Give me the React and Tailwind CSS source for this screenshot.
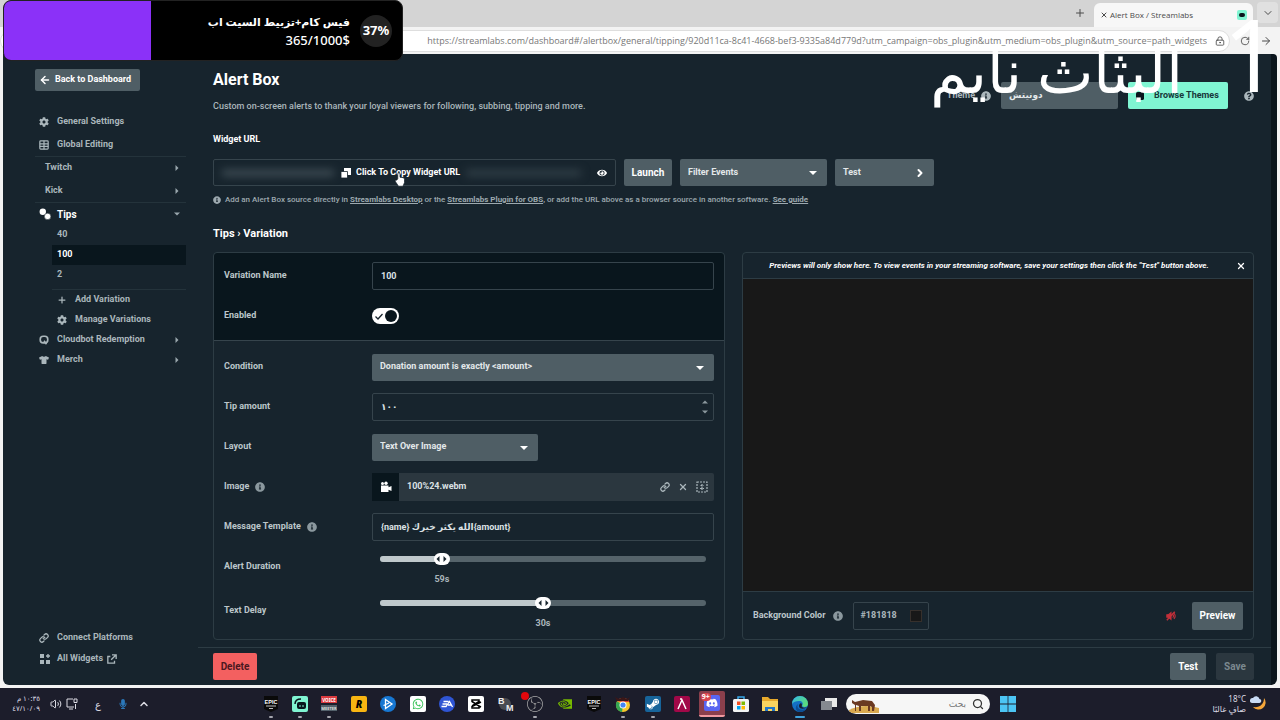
import React from "react";
import { FaCog, FaTshirt, FaInfoCircle, FaEye, FaQuestionCircle, FaWhatsapp, FaDiscord, FaSteamSymbol, FaVolumeMute, FaMicrophone } from "react-icons/fa";
import { SiNvidia, SiObsstudio } from "react-icons/si";
import { ArrowLeft, ArrowRight, ChevronDown, ChevronRight, ChevronUp, Link, Plus, Search, Volume2, X, LockKeyhole, RotateCw } from "lucide-react";

const control = "h-7 w-full rounded-xs border border-[#36444c] px-2 text-[9px] font-bold text-[#dbe1e4] outline-none";

function Caret({ dir = "down", className = "" }) {
  const d = { down: "M0 2h8L4 6z", right: "M2 0v8l4-4z", up: "M0 6h8L4 2z" }[dir];
  return (
    <svg viewBox="0 0 8 8" className={className} fill="currentColor" aria-hidden="true">
      <path d={d} />
    </svg>
  );
}

function GridIcon() {
  return (
    <svg viewBox="0 0 12 12" className="size-2.5" fill="none" stroke="currentColor" strokeWidth="1.5">
      <rect x="1" y="1" width="10" height="10" rx="1" />
      <path d="M6 1v10M1 4.500h5M6 7.500h5M6 4.500h5M1 7.500h5" />
    </svg>
  );
}

function TipsIcon() {
  return (
    <svg viewBox="0 0 12 12" className="size-3 text-white" fill="currentColor">
      <circle cx="3.8" cy="3.8" r="3.2" />
      <circle cx="8.6" cy="8.4" r="3.2" stroke="#17242d" strokeWidth=".5" />
    </svg>
  );
}

function BotIcon() {
  return (
    <svg viewBox="0 0 12 12" className="size-2.5" fill="none" stroke="currentColor" strokeWidth="2">
      <rect x="1.500" y="1.500" width="9" height="8" rx="3.500" />
      <path d="M6 7l3 4" />
    </svg>
  );
}

function WidgetsIcon() {
  return (
    <svg viewBox="0 0 12 12" className="size-3" fill="currentColor">
      <path d="M1 1h4v4H1zM1 7h4v4H1zM7 7h4v4H7zM8.300 1h1.400v1.300H11v1.400H9.700V5H8.300V3.700H7V2.300h1.300z" />
    </svg>
  );
}

function ExternalIcon() {
  return (
    <svg viewBox="0 0 12 12" className="size-2.5" fill="none" stroke="currentColor" strokeWidth="1.600">
      <path d="M4 3H1v8h8V8M6 1h5v5M11 1L5 7" />
    </svg>
  );
}

function MovieIcon() {
  return (
    <svg viewBox="0 0 12 12" className="size-3 text-white" fill="currentColor">
      <circle cx="2.500" cy="2.500" r="1.500" />
      <circle cx="6" cy="2.200" r="1.700" />
      <path d="M1 4.500h7.500v1.700L11.500 5v5L8.500 8.800V11H1z" />
    </svg>
  );
}

function SlashedSpeakerIcon() {
  return (
    <svg viewBox="0 0 12 12" className="size-2.5" fill="none" stroke="currentColor" strokeWidth="1.300">
      <path d="M1 4.500v3h2L6 10V2L3 4.500z" fill="currentColor" />
      <path d="M8 4q2 2 0 4M9.500 2.500q3 3.500 0 7" />
      <path d="M1 11L10.500 1" strokeWidth="1.800" />
    </svg>
  );
}

function NavRow({ icon, label, caret, className = "h-5", active }) {
  return (
    <a href="#nav" className={`flex items-center ${className} ${active ? "text-white" : "text-[#aab6bb]"}`}>
      {icon && <span className="flex w-[18px] shrink-0 items-center pr-1">{icon}</span>}
      <span className="grow">{label}</span>
      {caret && <Caret dir={caret} className="mr-1.5 size-1.5 text-[#9aa7ad]" />}
    </a>
  );
}

function Sidebar() {
  return (
    <nav className="flex w-[195px] shrink-0 flex-col pr-3 pb-4 pl-8 text-[9px] font-bold">
      <button className="mt-[15px] flex h-[22px] w-[105px] items-center gap-1 rounded-xs bg-[#4f5e65] pl-1 font-bold whitespace-nowrap text-white">
        <ArrowLeft className="size-3" strokeWidth={3} />
        Back to Dashboard
      </button>
      <div className="mt-5 border-b border-[#24333b] pl-1">
        <NavRow icon={<FaCog className="size-2.5" />} label="General Settings" className="h-[22px]" />
        <NavRow icon={<GridIcon />} label="Global Editing" className="h-[23px]" />
      </div>
      <div className="border-b border-[#24333b] pl-2.5">
        <NavRow label="Twitch" caret="right" className="h-[22px]" />
        <NavRow label="Kick" caret="right" className="h-[23px]" />
      </div>
      <div className="pl-1">
        <NavRow icon={<TipsIcon />} label="Tips" caret="down" active className="h-[22px] text-[10px]" />
        <div className="ml-[13px]">
          <NavRow label="40" className="h-5 pl-[5px]" />
          <NavRow label="100" active className="h-5 bg-[#09161d] pl-[5px]" />
          <NavRow label="2" className="h-5 pl-[5px]" />
          <div className="mt-1 border-t border-[#24333b] pl-[5px]">
            <NavRow icon={<Plus className="size-2.5" strokeWidth={3} />} label="Add Variation" />
            <NavRow icon={<FaCog className="size-2.5" />} label="Manage Variations" />
          </div>
        </div>
        <NavRow icon={<BotIcon />} label="Cloudbot Redemption" caret="right" />
        <NavRow icon={<FaTshirt className="size-2.5" />} label="Merch" caret="right" />
      </div>
      <div className="mt-auto pl-1">
        <NavRow icon={<Link className="size-2.5" strokeWidth={3} />} label="Connect Platforms" className="h-[22px]" />
        <NavRow icon={<WidgetsIcon />} label={<span className="flex items-center gap-1">All Widgets <ExternalIcon /></span>} />
      </div>
    </nav>
  );
}

function PickList({ label, options, className = "", caret = true, id }) {
  return (
    <div className={`relative ${className}`}>
      <select id={id} aria-label={label} className="h-[27px] w-full appearance-none rounded-xs bg-[#4f5e65] px-2 text-[9px] font-bold text-[#e3e8ea]">
        {options.map((o) => <option key={o}>{o}</option>)}
      </select>
      {caret && <Caret className="pointer-events-none absolute top-2.5 right-2.5 size-2 text-white" />}
    </div>
  );
}

function Row({ label, id, info, children }) {
  return (
    <div className="flex items-center">
      <label htmlFor={id} className="flex w-[148px] shrink-0 items-center gap-1.5 text-[#bcc6ca]">
        {label}
        {info && <FaInfoCircle className="size-2.5 text-[#8b989e]" />}
      </label>
      <div className="flex h-7 min-w-0 grow items-center">{children}</div>
    </div>
  );
}

function SliderRow({ label, id, percent, value, max, text }) {
  return (
    <div className="flex h-11 items-center">
      <label htmlFor={id} className="w-[148px] shrink-0 text-[#bcc6ca]">{label}</label>
      <div className="grow px-2 pt-1">
        <div className="relative flex h-4 items-center">
          <div className="h-1.5 w-full overflow-hidden rounded-full bg-[#55636a]">
            <div className="h-full bg-[#bfc8cb]" style={{ width: `${percent}%` }} />
          </div>
          <span className="absolute flex h-3 w-4 -translate-x-1/2 items-center justify-center gap-px rounded-full bg-white text-[#17242d]" style={{ left: `${percent}%` }}>
            <Caret dir="right" className="size-1.5 rotate-180" />
            <Caret dir="right" className="size-1.5" />
          </span>
          <input id={id} type="range" min="0" max={max} defaultValue={value} className="absolute inset-0 w-full cursor-pointer opacity-0" />
        </div>
        <div className="relative mt-1 h-4">
          <span className="absolute -translate-x-1/2 leading-4 text-[#aab6bb]" style={{ left: `${percent}%` }}>{text}</span>
        </div>
      </div>
    </div>
  );
}

function SettingsPanel() {
  return (
    <form className="rounded-sm border border-[#2d3c44] text-[9px] font-bold">
      <div className="flex flex-col gap-3 rounded-t-sm bg-[#09161d] px-2.5 pt-[9px] pb-2.5">
        <Row label="Variation Name" id="name">
          <input id="name" defaultValue="100" className={control} />
        </Row>
        <Row label="Enabled" id="enabled">
          <span className="relative flex h-4 w-[27px] items-center justify-between rounded-full bg-white px-0.5">
            <svg viewBox="0 0 10 10" className="size-2.5" fill="none" stroke="#17242d" strokeWidth="1.300"><path d="M1.500 5.500L4 8l4.500-5" /></svg>
            <span className="size-3 rounded-full bg-[#09161d]" />
            <input id="enabled" type="checkbox" defaultChecked className="absolute inset-0 opacity-0" />
          </span>
        </Row>
      </div>
      <div className="border-t border-[#36444c] px-2.5 pt-3 pb-1.5">
        <div className="flex flex-col gap-3">
          <Row label="Condition" id="condition">
            <PickList id="condition" label="Condition" options={["Donation amount is exactly <amount>"]} className="w-full" />
          </Row>
          <Row label="Tip amount" id="amount">
            <div className="relative w-full">
              <input id="amount" defaultValue="١٠٠" className={`${control} font-['Roboto','DejaVu_Sans',sans-serif]`} />
              <Caret dir="up" className="absolute top-1.5 right-1.5 size-1.5 text-[#8b989e]" />
              <Caret className="absolute right-1.5 bottom-1.5 size-1.5 text-[#8b989e]" />
            </div>
          </Row>
          <Row label="Layout" id="layout">
            <PickList id="layout" label="Layout" options={["Text Over Image"]} className="w-[166px]" />
          </Row>
          <Row label="Image" id="image" info>
            <div className="flex h-7 w-full items-center rounded-xs bg-[#2b373f]">
              <span className="flex h-7 w-[27px] shrink-0 items-center justify-center bg-[#09161d]"><MovieIcon /></span>
              <input id="image" defaultValue="100%24.webm" className="min-w-0 grow px-2 text-[#dbe1e4]" />
              <div className="flex items-center gap-2 pr-1.5 text-[#aab6bb]">
                <button type="button" aria-label="Link"><Link className="size-2.5" strokeWidth={3} /></button>
                <button type="button" aria-label="Remove"><X className="size-2.5" strokeWidth={3} /></button>
                <button type="button" aria-label="Select">
                  <svg viewBox="0 0 12 12" className="size-3" fill="none" stroke="currentColor" strokeWidth="1.200">
                    <rect x="1" y="1" width="10" height="10" strokeDasharray="2 1" />
                    <path d="M6 3v6M4.500 4.500h3M4 7.500h4" strokeDasharray="2 .5" />
                  </svg>
                </button>
              </div>
            </div>
          </Row>
          <Row label="Message Template" id="message" info>
            <input id="message" defaultValue="{name} الله يكثر خيرك{amount}" className={`${control} font-['Roboto','DejaVu_Sans',sans-serif]`} />
          </Row>
        </div>
        <div className="mt-1">
          <SliderRow label="Alert Duration" id="duration" percent={19} value={59} max={300} text="59s" />
          <SliderRow label="Text Delay" id="delay" percent={50} value={30} max={60} text="30s" />
        </div>
      </div>
    </form>
  );
}

function PreviewPanel() {
  return (
    <section className="flex flex-col rounded-sm border border-[#2d3c44] text-[9px] font-bold">
      <div className="flex h-[26px] items-center border-b border-[#2d3c44] px-[7px]">
        <p className="grow pr-2 text-center text-[8px] font-bold text-white italic">
          Previews will only show here. To view events in your streaming software, save your settings then click the "Test" button above.
        </p>
        <button aria-label="Close"><X className="size-2.5 text-white" strokeWidth={3} /></button>
      </div>
      <div className="grow bg-[#181818]" />
      <div className="flex h-12 items-center border-t border-[#2d3c44] px-2.5">
        <label htmlFor="bg" className="flex items-center gap-2 text-[#bcc6ca]">
          Background Color
          <FaInfoCircle className="size-2.5 text-[#8b989e]" />
        </label>
        <div className="ml-2.5 flex h-7 w-[76px] items-center justify-between rounded-xs border border-[#36444c] px-1.5">
          <input id="bg" defaultValue="#181818" className="w-12 text-[#aab6bb]" />
          <span className="size-3 border border-[#36302c] bg-[#181818]" />
        </div>
        <button aria-label="Mute" className="mr-4 ml-auto text-[#c4303a]"><SlashedSpeakerIcon /></button>
        <button className="h-7 w-[51px] rounded-xs bg-[#4f5e65] text-[10px] text-white">Preview</button>
      </div>
    </section>
  );
}

function PageHeader() {
  return (
    <header className="flex justify-between">
      <div>
        <h1 className="text-base leading-5 font-bold text-white">Alert Box</h1>
        <p className="mt-2 text-[9px] leading-4 font-medium text-[#aab6bb]">
          Custom on-screen alerts to thank your loyal viewers for following, subbing, tipping and more.
        </p>
      </div>
      <div className="mt-3 flex h-[27px] items-center text-[9px] font-bold">
        <label htmlFor="theme" className="flex items-center gap-1.5 text-[#aab6bb]">
          Theme
          <FaInfoCircle className="size-2.5" />
        </label>
        <PickList id="theme" label="Theme" options={["دونيتش"]} caret={false} className="ml-2.5 w-[117px]" />
        <button className="ml-2.5 flex h-[27px] w-[100px] items-center gap-2.5 rounded-xs bg-[#80f5d2] pl-2 font-bold whitespace-nowrap text-[#17383a]">
          <svg viewBox="0 0 10 10" className="size-2" fill="#09161d"><rect width="10" height="10" rx="2" /></svg>
          Browse Themes
        </button>
        <FaQuestionCircle className="ml-4 size-2.5 text-[#aab6bb]" />
      </div>
    </header>
  );
}

function WidgetUrl() {
  return (
    <section>
      <h2 className="mt-[17px] text-[9px] leading-4 font-bold text-white">Widget URL</h2>
      <div className="mt-3 flex h-[27px] gap-2 text-[9px] font-bold">
        <div className="flex w-[403px] items-center rounded-xs border border-[#36444c] px-2">
          <span className="h-1.5 w-28 bg-[#44525a] blur-xs" />
          <button className="relative mx-1.5 flex items-center gap-1 font-bold whitespace-nowrap text-white">
            <svg viewBox="0 0 12 12" className="size-3" fill="currentColor">
              <path d="M4 1h7v7H4z" />
              <path d="M1 4.500h6.500V11H1z" stroke="#17242d" strokeWidth=".8" />
            </svg>
            Click To Copy Widget URL
            <svg viewBox="0 0 16 20" className="absolute top-1.5 left-[54px] w-3" fill="#fff" stroke="#17242d">
              <path d="M5 9V2.500a1.500 1.500 0 0 1 3 0V7c4 0 6 1 6 3v4l-2 5H6l-4-6c-1-2 .5-3 1.500-2z" />
            </svg>
          </button>
          <span className="h-1.5 grow bg-[#34424a] blur-xs" />
          <button aria-label="Show" className="ml-4"><FaEye className="size-2.5 text-white" /></button>
        </div>
        <button className="w-12 rounded-xs bg-[#4f5e65] text-[10px] text-white">Launch</button>
        <PickList label="Filter Events" options={["Filter Events"]} className="w-[147px]" />
        <button className="flex w-[99px] items-center justify-between rounded-xs bg-[#4f5e65] px-2 text-[#e3e8ea]">
          Test
          <ChevronRight className="size-3 text-white" strokeWidth={4} />
        </button>
      </div>
      <p className="mt-1.5 flex items-center gap-1 text-[8px] leading-4 font-medium text-[#9da9af]">
        <FaInfoCircle className="size-2" />
        <span>
          Add an Alert Box source directly in <a href="#desktop" className="font-bold underline">Streamlabs Desktop</a> or the{" "}
          <a href="#obs" className="font-bold underline">Streamlabs Plugin for OBS</a>, or add the URL above as a browser source in another software.{" "}
          <a href="#guide" className="font-bold underline">See guide</a>
        </span>
      </p>
    </section>
  );
}

function BrowserChrome() {
  return (
    <div className="bg-[#d4d4d4] text-[#4a4a4a]">
      <div className="flex h-[27px] items-end justify-end gap-1 pr-0.5">
        <button aria-label="New tab" className="mr-1 mb-2"><Plus className="size-3" strokeWidth={2} /></button>
        <div className="flex h-6 w-[159px] items-center gap-0.5 rounded-t-md bg-[#f7f7f7] px-1.5 font-['Open_Sans',sans-serif] text-[8px] font-medium">
          <X className="size-2" strokeWidth={3} />
          <span className="grow">Alert Box / Streamlabs</span>
          <span className="flex size-2.5 items-center justify-center rounded-xs bg-[#80f5d2]"><span className="h-1 w-1.5 rounded-xs bg-[#09161d]" /></span>
        </div>
        <button aria-label="Tabs" className="mb-1 flex size-[21px] items-center justify-center rounded-sm bg-[#e0e0e0]"><ChevronDown className="size-3" /></button>
      </div>
      <div className="flex h-[27px] items-center gap-2.5 bg-[#f3f3f3] pr-2">
        <div className="flex h-[22px] grow items-center justify-end gap-2 rounded-full border border-[#dedede] bg-white px-1">
          <input aria-label="Address" className="grow text-right font-['Open_Sans',sans-serif] text-[9px] text-[#777]" defaultValue="https://streamlabs.com/dashboard#/alertbox/general/tipping/920d11ca-8c41-4668-bef3-9335a84d779d?utm_campaign=obs_plugin&utm_medium=obs_plugin&utm_source=path_widgets" />
          <LockKeyhole className="size-2.5" />
        </div>
        <RotateCw className="size-2.5" />
        <ArrowRight className="size-3" />
      </div>
    </div>
  );
}

function Tile({ children, className = "" }) {
  return <span className={`flex size-4 items-center justify-center overflow-hidden rounded-xs ${className}`}>{children}</span>;
}

function Epic() {
  return (
    <svg viewBox="0 0 16 16" className="size-4">
      <path d="M1 0h14v13l-7 3-7-3z" fill="#0a0a0a" />
      <text x="8" y="7.500" textAnchor="middle" fontSize="5.500" fontWeight="700" fill="#fff" fontFamily="Liberation Sans">EPIC</text>
      <path d="M3 10h10M6 12.500h4" stroke="#bbb" />
    </svg>
  );
}

const apps = [
  { name: "Epic Games", icon: <Epic />, open: true },
  { name: "Streamlabs", open: true, icon: <Tile className="bg-[#80f5d2]"><svg viewBox="0 0 16 16" className="size-4"><rect x="5" y="6" width="9" height="7" rx="2" fill="#09161d" /><path d="M3 8q0-5 6-5" stroke="#09161d" strokeWidth="1.500" fill="none" /><path d="M8 9v2M11 9v2" stroke="#80f5d2" /></svg></Tile> },
  { name: "Voicemeeter", open: true, icon: <svg viewBox="0 0 16 16" className="size-4"><path fill="#dc3b3f" d="M0 0h16v7H0z" /><path fill="#52606a" d="M0 9h16v6H0z" /><text x="8" y="5.500" textAnchor="middle" fontSize="4.500" fontWeight="700" fill="#fff">VOICE</text><text x="8" y="13.500" textAnchor="middle" fontSize="4" fontWeight="700" fill="#ddd">MEETER</text></svg> },
  { name: "Rockstar", icon: <Tile className="bg-[#f8b512] text-[10px] font-black text-black italic">R</Tile> },
  { name: "Player", icon: <svg viewBox="0 0 16 16" className="size-4"><circle cx="8" cy="8" r="8" fill="#1777d2" /><path d="M5.500 3.500l6.500 4.500-6.500 4.500zM3.500 9.500L9 7" fill="none" stroke="#fff" strokeWidth="1.300" /></svg> },
  { name: "WhatsApp", icon: <Tile className="rounded-full bg-white text-[#3cc35a]"><FaWhatsapp className="size-3" /></Tile> },
  { name: "EA", icon: <svg viewBox="0 0 16 16" className="size-4"><circle cx="8" cy="8" r="8" fill="#2f55d4" /><path d="M4.500 5.500h5M3.500 8h4.500M2.500 10.500h4.500l3.500-5 3 5.500M9 9h3" fill="none" stroke="#fff" strokeWidth="1.300" /></svg> },
  { name: "CapCut", icon: <Tile className="bg-white"><svg viewBox="0 0 12 12" className="size-3" fill="none" stroke="#000" strokeWidth="1.500"><path d="M11 4L2 8.500V10h7V8L2 3.500V2h7v1.500L2 8M9 8l2 1" /></svg></Tile> },
  { name: "BM", icon: <svg viewBox="0 0 16 16" className="size-4"><circle cx="7" cy="8" r="6" fill="#4a4b52" /><g fill="#eee" fontWeight="700" fontSize="9" fontFamily="Liberation Sans"><text x="0" y="8">B</text><text x="8" y="15">M</text></g></svg> },
  { name: "OBS", open: true, icon: <span className="relative"><SiObsstudio className="size-4 text-[#a9a9a9]" /><i className="absolute -top-1 -left-1.5 size-2 rounded-full bg-[#e2080c]" /></span> },
  { name: "NVIDIA", icon: <SiNvidia className="size-3.5 text-[#76b900]" /> },
  { name: "Epic Games Launcher", icon: <Epic /> },
  { name: "Chrome", open: true, icon: <svg viewBox="0 0 16 16" className="size-4"><circle cx="8" cy="9" r="7" fill="#f5c62c" /><path d="M8 9L2 5.300A7 7 0 0 0 7 16z" fill="#35a853" /><path d="M2 5.300A7 7 0 0 1 14.200 6H8z" fill="#de4032" /><circle cx="8" cy="9" r="3.500" fill="#fff" /><circle cx="8" cy="9" r="2.600" fill="#4285f4" /><path d="M0 1l4 2 4-2 4 2 3-2-2 4H2z" fill="#3a1718" /></svg> },
  { name: "Steam", open: true, icon: <Tile className="rounded-full bg-[#17649a] text-white"><FaSteamSymbol className="size-3.5" /></Tile> },
  { name: "Lambda", icon: <Tile className="rounded-none bg-[#a20848]"><svg viewBox="0 0 12 12" className="size-3" stroke="#fff" strokeWidth="1.500" fill="none"><path d="M2 11L6 2l4 9M4 1h2" /></svg></Tile> },
  { name: "Discord", icon: <span className="relative flex h-[26px] w-[26px] items-center justify-center rounded-xs border-b-2 border-[#f0999f] bg-[#8b3f4c]"><Tile className="rounded-full bg-[#5865f2] text-white"><FaDiscord className="size-3" /></Tile><i className="absolute top-0.5 left-0.5 rounded-full bg-[#d94550] px-px text-[7px] leading-2 font-bold text-white not-italic">9+</i></span> },
  { name: "Store", icon: <svg viewBox="0 0 16 16" className="size-4"><path d="M5 3V1h6v2" stroke="#38a7e8" strokeWidth="1.500" fill="none" /><rect y="3" width="16" height="13" rx="1.500" fill="#f4f4f4" /><path fill="#f25022" d="M4 5.500h3.500V9H4z" /><path fill="#7fba00" d="M8.500 5.500H12V9H8.500z" /><path fill="#00a4ef" d="M4 10h3.500v3.500H4z" /><path fill="#ffb900" d="M8.500 10H12v3.500H8.500z" /></svg> },
  { name: "Explorer", icon: <svg viewBox="0 0 16 16" className="size-4"><path d="M0 1h6l2 2h8v12H0z" fill="#e8a92c" /><path d="M0 5h16v10H0z" fill="#fbd560" /><path d="M3 15v-4h10v4h-3v-2H6v2z" fill="#2277c9" /></svg> },
  { name: "Edge", open: true, icon: <svg viewBox="0 0 16 16" className="size-4"><defs><linearGradient id="eg" x2="1" y2=".5"><stop stopColor="#35b8e8" /><stop offset="1" stopColor="#5bdc7c" /></linearGradient></defs><circle cx="8" cy="8" r="8" fill="#1470c4" /><path d="M0 8a8 8 0 0 1 16 0c0 3-4 4-6 2 2-3 0-5-3-5S1 6 0 8z" fill="url(#eg)" /><path d="M6 8c-2 4 2 7 8 5-1 1.500-3 3-6 3-4 0-6-5-2-8z" fill="#0c4d93" /><path d="M9 7c2 2 0 3 1 4s4 1 5 0c-1 2-8 3-8-1 0-2 1-2 2-3z" fill="#1c1d2b" /></svg> },
  { name: "Task view", icon: <svg viewBox="0 0 16 16" className="size-4"><rect x="4" y="2" width="12" height="9" fill="#e9e9e9" /><rect y="5" width="11" height="9" fill="#858990" /></svg> },
];

function Taskbar() {
  return (
    <footer className="flex h-8 items-center bg-[#1c1d2b] font-['Noto_Sans','DejaVu_Sans',sans-serif] text-[8px] text-[#dcdce4]">
      <div className="flex w-64 shrink-0 items-center">
        <div dir="rtl" className="w-10 text-[7px] leading-[10px] whitespace-nowrap">
          <div>١٠:٣٥ م</div>
          <div><bdo dir="ltr">٤٧/١٠/٠٩</bdo></div>
        </div>
        <Volume2 className="ml-2.5 size-3" />
        <svg viewBox="0 0 12 12" className="ml-1 size-3" fill="none" stroke="currentColor"><path d="M7 1H1v8h7M3 11h4M9.500 6v5M8 1h3v3.500H8z" /></svg>
        <span className="ml-3 w-4 text-center text-[10px]">ع</span>
        <FaMicrophone className="ml-3 size-2.5 text-[#2b78ba]" />
        <ChevronUp className="ml-2.5 size-3" strokeWidth={3} />
      </div>
      <div className="grid w-[588px] shrink-0 grid-cols-20">
        {apps.map((a) => (
          <button key={a.name} aria-label={a.name} className="relative flex h-8 items-center justify-center">
            {a.icon}
            {a.open && <i className={`absolute bottom-0.5 h-0.5 rounded-full ${a.name === "Edge" ? "w-2.5 bg-[#3ea2dc]" : "w-1 bg-[#a5a6ae]"}`} />}
          </button>
        ))}
      </div>
      <label dir="rtl" className="ml-0.5 flex h-5 w-36 shrink-0 items-center gap-1.5 overflow-hidden rounded-full bg-[#f6f6f6] pr-1.5 text-[#333]">
        <Search className="size-3" strokeWidth={2.500} />
        <input aria-label="بحث" placeholder="بحث" className="w-20 text-[9px] placeholder:text-[#777]" />
        <svg viewBox="0 0 30 18" className="mr-auto ml-0.5 h-[18px] w-8" aria-hidden="true">
          <path d="M0 15q14-7 30-2v5H0z" fill="#d9a94f" />
          <path d="M3 5l3 2 8-2 9 1 3 4-1 6h-2v-4l-2-1v5h-2v-5h-7v5h-2v-5l-3-1v6H6V10L3 8z" fill="#6b3922" />
        </svg>
      </label>
      <svg viewBox="0 0 16 16" className="ml-2.5 size-4 shrink-0" fill="#4cc5f4"><path d="M0 0h7.600v7.600H0zM8.400 0H16v7.600H8.400zM0 8.400h7.600V16H0zM8.400 8.400H16V16H8.400z" /></svg>
      <div className="mr-3 ml-auto flex items-center gap-1">
        <div className="text-right leading-[10px]"><div>18°C</div><div dir="rtl">صافٍ غالبًا</div></div>
        <svg viewBox="0 0 18 18" className="size-[18px]"><path d="M14 3a7 7 0 1 1-11 9c7 1 11-3 11-9z" fill="#f4a63a" /><path d="M2 8a2.500 2.500 0 0 1 1-5 3.500 3.500 0 0 1 6.500 1A2 2 0 0 1 9 8z" fill="#c9dcf5" /></svg>
      </div>
    </footer>
  );
}

function GoalWidget() {
  return (
    <div className="absolute top-0 left-[3px] flex h-[61px] w-[400px] overflow-hidden rounded-lg border border-[#222] bg-black font-['Noto_Sans','DejaVu_Sans',sans-serif] text-[13px] text-white">
      <div className="w-[37%] bg-[#8b31f8]" />
      <div className="flex grow items-center justify-end gap-2.5 pr-2.5">
        <div dir="rtl" className="leading-[19px]">
          <div className="text-[11px] font-bold">فيس كام+تزبيط السيت اب</div>
          <div className="font-medium"><bdo dir="ltr">365/1000$</bdo></div>
        </div>
        <span className="flex size-8 items-center justify-center rounded-full bg-[#222] font-bold">37%</span>
      </div>
    </div>
  );
}

export default function App() {
  return (
    <div className="relative flex min-h-screen flex-col overflow-hidden bg-[#1c1d2b] font-['Roboto','DejaVu_Sans',sans-serif]">
      <BrowserChrome />
      <div className="flex grow flex-col bg-[#f3f3f3] px-[3px] pb-[3px]">
        <div className="flex grow overflow-hidden rounded-b-md rounded-tr-sm border-r-[6px] border-[#0b151c] bg-[#17242d]">
          <Sidebar />
          <main className="flex min-w-0 grow flex-col">
            <div className="grow pt-4 pr-[17px] pb-1.5 pl-[15px]">
              <PageHeader />
              <WidgetUrl />
              <h2 className="mt-4 text-[11px] leading-5 font-bold text-white">Tips › Variation</h2>
              <div className="mt-2 grid grid-cols-2 gap-[17px]">
                <SettingsPanel />
                <PreviewPanel />
              </div>
            </div>
            <div className="flex h-[38px] items-center border-t border-[#2d3c44] pr-[17px] pl-[15px] text-[10px] font-bold">
              <button className="h-[27px] w-11 rounded-xs bg-[#f36060] text-[#4a1820]">Delete</button>
              <button className="ml-auto h-[27px] w-9 rounded-xs bg-[#4f5e65] text-white">Test</button>
              <button className="ml-2.5 h-[27px] w-[38px] rounded-xs bg-[#2b373f] text-[#7c898f]">Save</button>
            </div>
          </main>
        </div>
      </div>
      <Taskbar />
      <GoalWidget />
      <div dir="rtl" className="pointer-events-none absolute top-0 right-0 flex items-start text-white">
        <span className="font-['Open_Sans',sans-serif] text-[100px] leading-[106px]">1</span>
        <span className="mt-7 mr-10 font-['Liberation_Serif','DejaVu_Sans',serif] text-[60px] leading-[90px]">البثاث نايم</span>
      </div>
    </div>
  );
}
